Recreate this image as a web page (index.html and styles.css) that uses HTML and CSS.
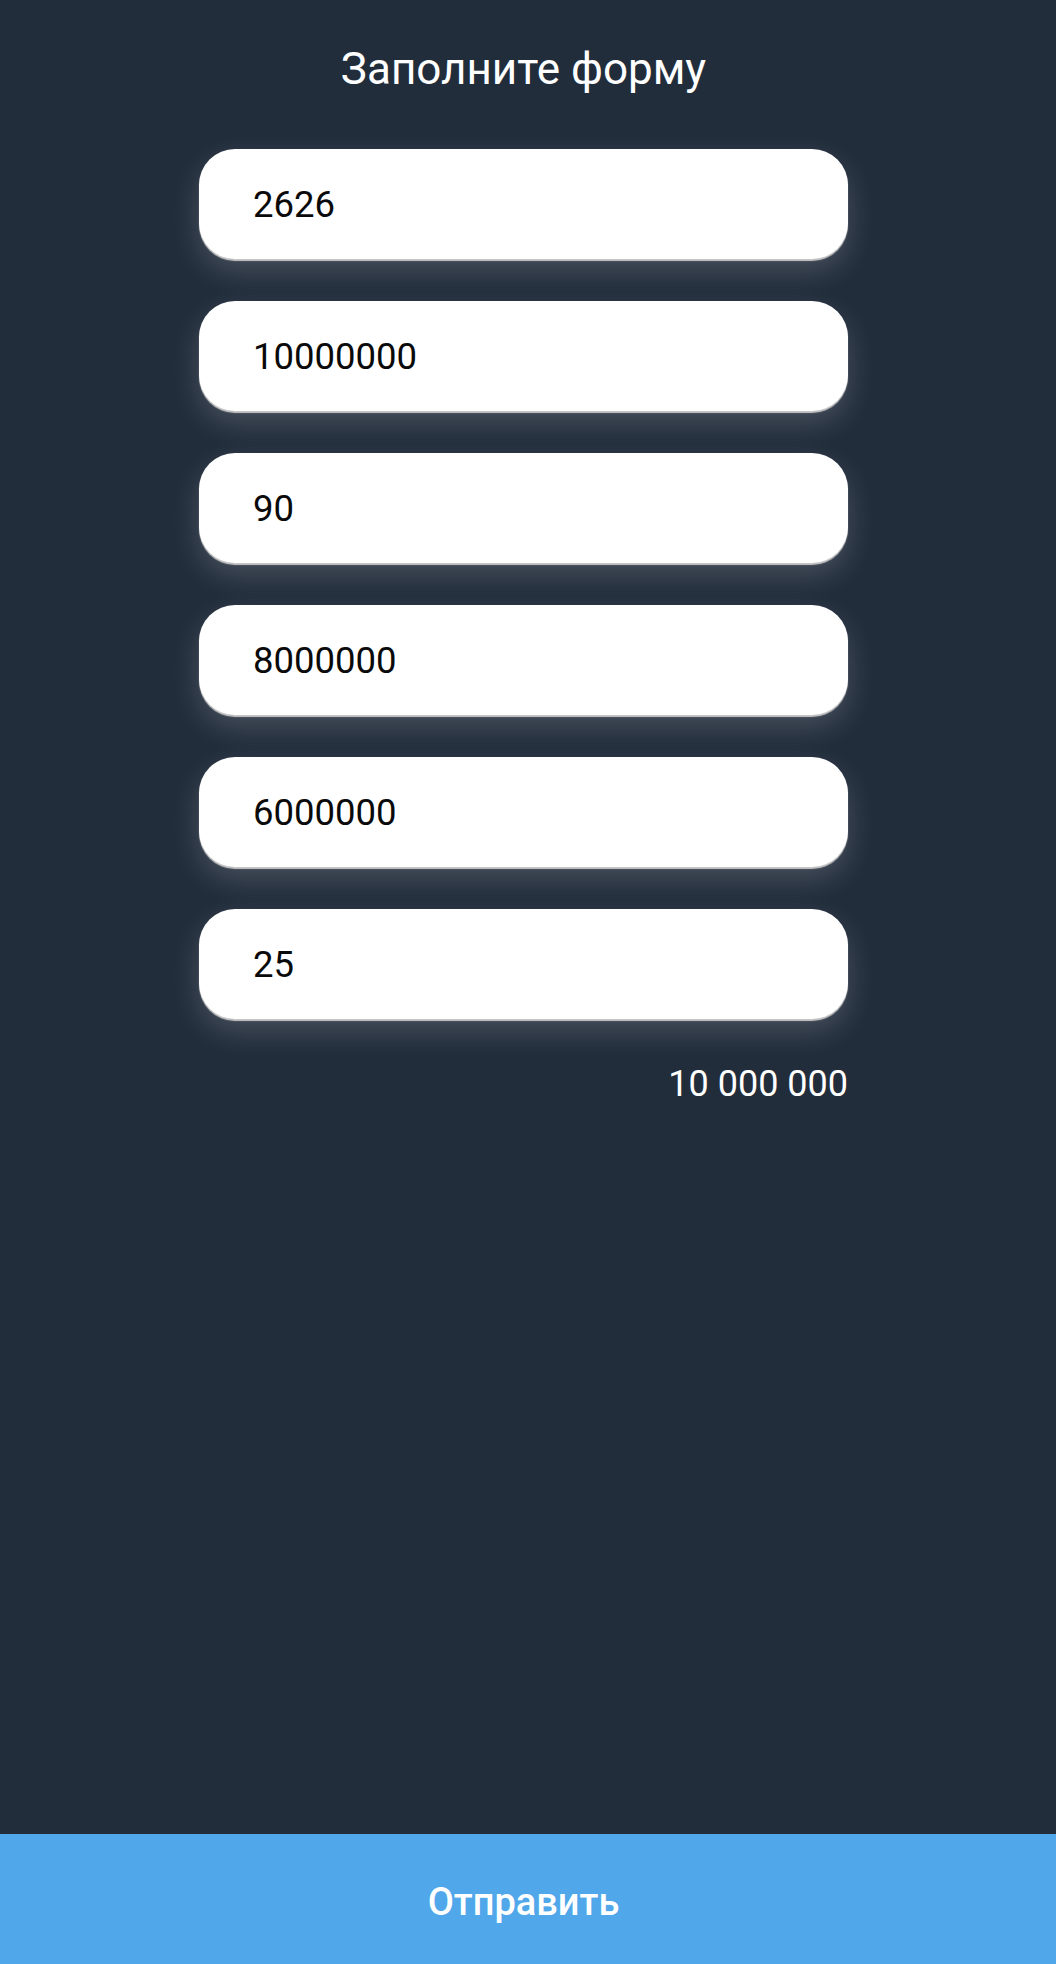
FILE: index.html
```html
<!DOCTYPE html>
<html lang="ru">
<head>
<meta charset="utf-8">
<title>Заполните форму</title>
<link rel="stylesheet" href="styles.css">
</head>
<body>
<div class="page">
  <main class="content">
    <h1 class="title">Заполните форму</h1>
    <form class="form">
      <input class="field" type="text" value="2626">
      <input class="field" type="text" value="10000000">
      <input class="field" type="text" value="90">
      <input class="field" type="text" value="8000000">
      <input class="field" type="text" value="6000000">
      <input class="field" type="text" value="25">
      <div class="result">10 000 000</div>
    </form>
  </main>
  <button class="submit" type="button">Отправить</button>
</div>
</body>
</html>
```

FILE: styles.css
```css
html, body {
  margin: 0;
  padding: 0;
  background: #222d3c;
}
body {
  font-family: Roboto, "Noto Sans", "Liberation Sans", sans-serif;
}
.page {
  min-height: 1964px;
  display: flex;
  flex-direction: column;
}
.content {
  flex: 1;
  display: flex;
  flex-direction: column;
  align-items: center;
  padding-right: 9px;
}
.title {
  margin: 0;
  padding-top: 43px;
  font-size: 44px;
  line-height: 52px;
  font-weight: 400;
  color: #ffffff;
  text-align: center;
}
.form {
  width: 649px;
  margin-top: 54px;
  display: flex;
  flex-direction: column;
  gap: 42px;
}
.field {
  box-sizing: border-box;
  display: block;
  width: 100%;
  height: 110px;
  margin: 0;
  padding: 0 20px 0 54px;
  border: none;
  border-radius: 36px;
  background: #ffffff;
  color: #0a0a0a;
  font-family: Roboto, "Noto Sans", "Liberation Sans", sans-serif;
  font-size: 36.5px;
  outline: none;
  box-shadow: 0 2px 1px rgba(205, 205, 205, 0.95), 0 12px 30px rgba(255, 255, 255, 0.17);
}
.result {
  margin-top: 2px;
  text-align: right;
  color: #ffffff;
  font-size: 36px;
  line-height: 42px;
}
.submit {
  display: flex;
  align-items: center;
  justify-content: center;
  width: 100%;
  height: 130px;
  margin: 0;
  padding: 6px 9px 0 0;
  border: none;
  background: #50a7e9;
  color: #ffffff;
  font-family: Roboto, "Noto Sans", "Liberation Sans", sans-serif;
  font-size: 38px;
  font-weight: 500;
}
```
